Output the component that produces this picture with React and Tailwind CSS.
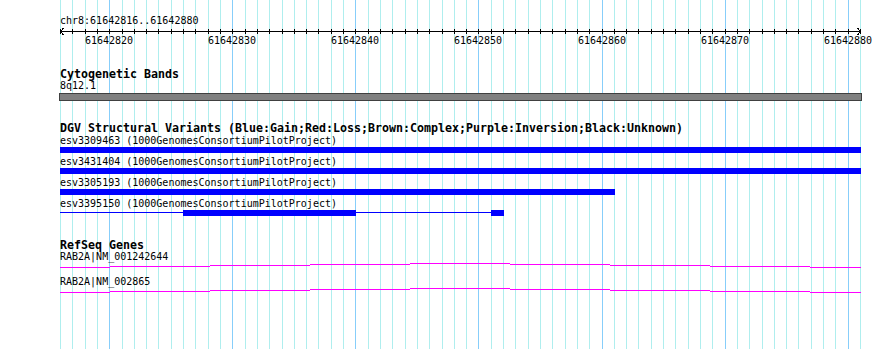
import React from "react";

const LEFT = 60;
const SPAN = 800;
const BASES = 65;
const START = 61642816;
const px = (i) => Math.round(LEFT + (i * SPAN) / BASES);
const ticks = Array.from({ length: BASES + 1 }, (_, i) => i);

const variants = [
  { id: "esv3309463", parts: [[60, 861]] },
  { id: "esv3431404", parts: [[60, 861]] },
  { id: "esv3305193", parts: [[60, 615]] },
  { id: "esv3395150", line: [60, 504], parts: [[183, 356], [491, 504]] },
];

// intron "hat" seen at this zoom: stepped line, peak in the middle
const hat = [
  [60, 110, 4], [110, 210, 3], [210, 310, 2], [310, 410, 1], [410, 510, 0],
  [510, 610, 1], [610, 710, 2], [710, 810, 3], [810, 861, 4],
];

const genes = ["RAB2A|NM_001242644", "RAB2A|NM_002865"];

function Grid() {
  return (
    <svg className="absolute inset-0" width="890" height="349" shapeRendering="crispEdges">
      {ticks.map((i) => (
        <rect
          key={i}
          x={px(i)}
          y={0}
          width={1}
          height={349}
          fill={(START + i) % 10 === 0 ? "#87cefa" : "#afeeee"}
        />
      ))}
    </svg>
  );
}

function Ruler() {
  return (
    <>
      <svg width="890" height="9" className="block" shapeRendering="crispEdges">
        <rect x={60} y={5} width={801} height={1} fill="#000" />
        {ticks.map((i) => (
          <rect key={i} x={px(i)} y={3} width={1} height={5} fill="#000" />
        ))}
        <path d="M63.5 2 L60.5 5.5 L63.5 9" stroke="#000" fill="none" />
        <path d="M857.5 2 L860.5 5.5 L857.5 9" stroke="#000" fill="none" />
      </svg>
      <div className="relative h-[11px] leading-[11px]">
        {ticks
          .filter((i) => (START + i) % 10 === 0)
          .map((i) => (
            <span
              key={i}
              className="absolute top-0 -translate-x-1/2"
              style={{ left: px(i) }}
            >
              {START + i}
            </span>
          ))}
      </div>
    </>
  );
}

function Title({ children, className = "" }) {
  return (
    <div className={"pl-[60px] h-[11px] leading-[11px] text-[11.63px] font-bold whitespace-nowrap " + className}>
      {children}
    </div>
  );
}

function Label({ children }) {
  return <div className="pl-[60px] h-[11px] leading-[11px] whitespace-nowrap">{children}</div>;
}

export default function App() {
  return (
    <div className="relative w-[890px] h-[349px] overflow-hidden bg-white text-black text-[10px] font-['DejaVu_Sans_Mono','Liberation_Mono',monospace]">
      <Grid />
      <div className="relative pt-[15px]">
        <Label>chr8:61642816..61642880</Label>
        <Ruler />

        {/* Cytogenetic Bands */}
        <Title className="mt-[23px]">Cytogenetic Bands</Title>
        <Label>8q12.1</Label>
        <div className="mt-[2px] ml-[59px] w-[803px] h-[8px] border border-[#404040] bg-[#808080]" />

        {/* DGV */}
        <Title className="mt-[22px]">
          DGV Structural Variants (Blue:Gain;Red:Loss;Brown:Complex;Purple:Inversion;Black:Unknown)
        </Title>
        <div className="mt-[1px]">
          {variants.map((v) => (
            <div key={v.id} className="h-[21px]">
              <Label>{v.id} (1000GenomesConsortiumPilotProject)</Label>
              <svg width="890" height="10" className="block" shapeRendering="crispEdges">
                {v.line && (
                  <rect x={v.line[0]} y={3} width={v.line[1] - v.line[0]} height={1} fill="#0000ff" />
                )}
                {v.parts.map(([a, b]) => (
                  <rect key={a} x={a} y={1} width={b - a} height={6} fill="#0000ff" />
                ))}
              </svg>
            </div>
          ))}
        </div>

        {/* RefSeq */}
        <Title className="mt-[21px]">RefSeq Genes</Title>
        {genes.map((g) => (
          <div key={g} className="h-[25px]">
            <Label>{g}</Label>
            <svg width="890" height="14" className="block" shapeRendering="crispEdges">
              {hat.map(([a, b, dy]) => (
                <rect key={a} x={a} y={1 + dy} width={b - a} height={1} fill="#ff00ff" />
              ))}
            </svg>
          </div>
        ))}
      </div>
    </div>
  );
}
